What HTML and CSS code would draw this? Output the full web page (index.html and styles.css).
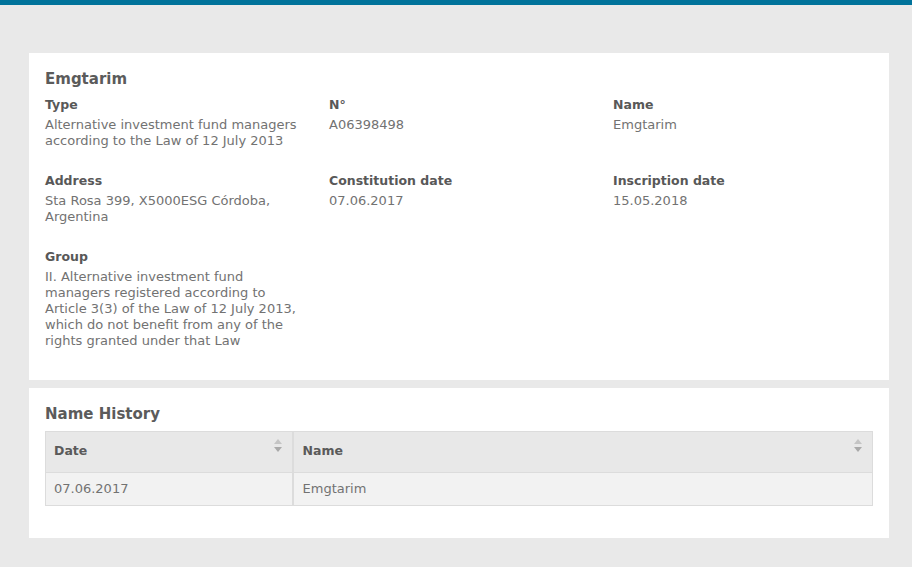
FILE: index.html
```html
<!DOCTYPE html>
<html>
<head>
<meta charset="utf-8">
<link rel="stylesheet" href="styles.css">
</head>
<body>
<div class="topbar"></div>
<main class="page">
  <section class="card">
    <h2 class="card-title">Emgtarim</h2>
    <div class="fields">
      <div class="field">
        <div class="label">Type</div>
        <div class="value">Alternative investment fund managers according to the Law of 12 July 2013</div>
      </div>
      <div class="field">
        <div class="label">N°</div>
        <div class="value">A06398498</div>
      </div>
      <div class="field">
        <div class="label">Name</div>
        <div class="value">Emgtarim</div>
      </div>
      <div class="field">
        <div class="label">Address</div>
        <div class="value">Sta Rosa 399, X5000ESG Córdoba, Argentina</div>
      </div>
      <div class="field">
        <div class="label">Constitution date</div>
        <div class="value">07.06.2017</div>
      </div>
      <div class="field">
        <div class="label">Inscription date</div>
        <div class="value">15.05.2018</div>
      </div>
      <div class="field">
        <div class="label">Group</div>
        <div class="value">II. Alternative investment fund managers registered according to Article 3(3) of the Law of 12 July 2013, which do not benefit from any of the rights granted under that Law</div>
      </div>
    </div>
  </section>
  <section class="card card-history">
    <h2 class="card-title">Name History</h2>
    <table class="history">
      <thead>
        <tr>
          <th class="col-date">Date<span class="sort"><i class="up"></i><i class="down"></i></span></th>
          <th class="col-name">Name<span class="sort"><i class="up"></i><i class="down"></i></span></th>
        </tr>
      </thead>
      <tbody>
        <tr>
          <td>07.06.2017</td>
          <td class="col-name">Emgtarim</td>
        </tr>
      </tbody>
    </table>
  </section>
</main>
</body>
</html>
```
FILE: styles.css
```css
* { box-sizing: border-box; }
html, body { margin: 0; padding: 0; }
body {
  background: #e9e9e9;
  font-family: "DejaVu Sans", "Open Sans", sans-serif;
  color: #6e6e6e;
  font-size: 13px;
}
.topbar {
  height: 5px;
  background: #00739b;
}
.page {
  padding: 48px 23px 0 29px;
}
.card {
  background: #fff;
  padding: 16px 16px 31px;
  margin-bottom: 8px;
}
.card-title {
  margin: 0 0 8px;
  font-size: 15px;
  line-height: 20px;
  font-weight: bold;
  color: #5b5b5b;
}
.fields {
  display: grid;
  grid-template-columns: 284px 284px 1fr;
  row-gap: 24px;
}
.field { padding-right: 22px; }
.label {
  font-weight: bold;
  font-size: 12.5px;
  color: #585858;
  line-height: 16px;
  margin-bottom: 4px;
}
.value {
  line-height: 16px;
  color: #727272;
}
.card-history { padding-bottom: 32px; }
.card-history .card-title { margin-bottom: 7px; }
.history {
  width: 100%;
  border-collapse: collapse;
  border: 1px solid #dcdcdc;
}
.history th {
  position: relative;
  background: #e8e8e8;
  text-align: left;
  font-weight: bold;
  font-size: 12.5px;
  color: #5a5a5a;
  height: 41px;
  padding: 0 8px 3px;
  border: 1px solid #dcdcdc;
}
.history th.col-date { width: 247px; border-right: 2px solid #dcdcdc; }
.history .col-name { padding-left: 9px; }
.history td {
  background: #f2f2f2;
  height: 33px;
  padding: 0 8px 1px;
  color: #727272;
  border-right: 2px solid #dcdcdc;
}
.history td:last-child { border-right: 1px solid #dcdcdc; }
.sort {
  position: absolute;
  right: 10px;
  top: 7px;
  display: flex;
  flex-direction: column;
  gap: 3px;
}
.sort i {
  display: block;
  width: 0;
  height: 0;
  border-left: 4px solid transparent;
  border-right: 4px solid transparent;
}
.sort .up { border-bottom: 5px solid #c4c4c4; }
.sort .down { border-top: 5px solid #a9a9a9; }
```
